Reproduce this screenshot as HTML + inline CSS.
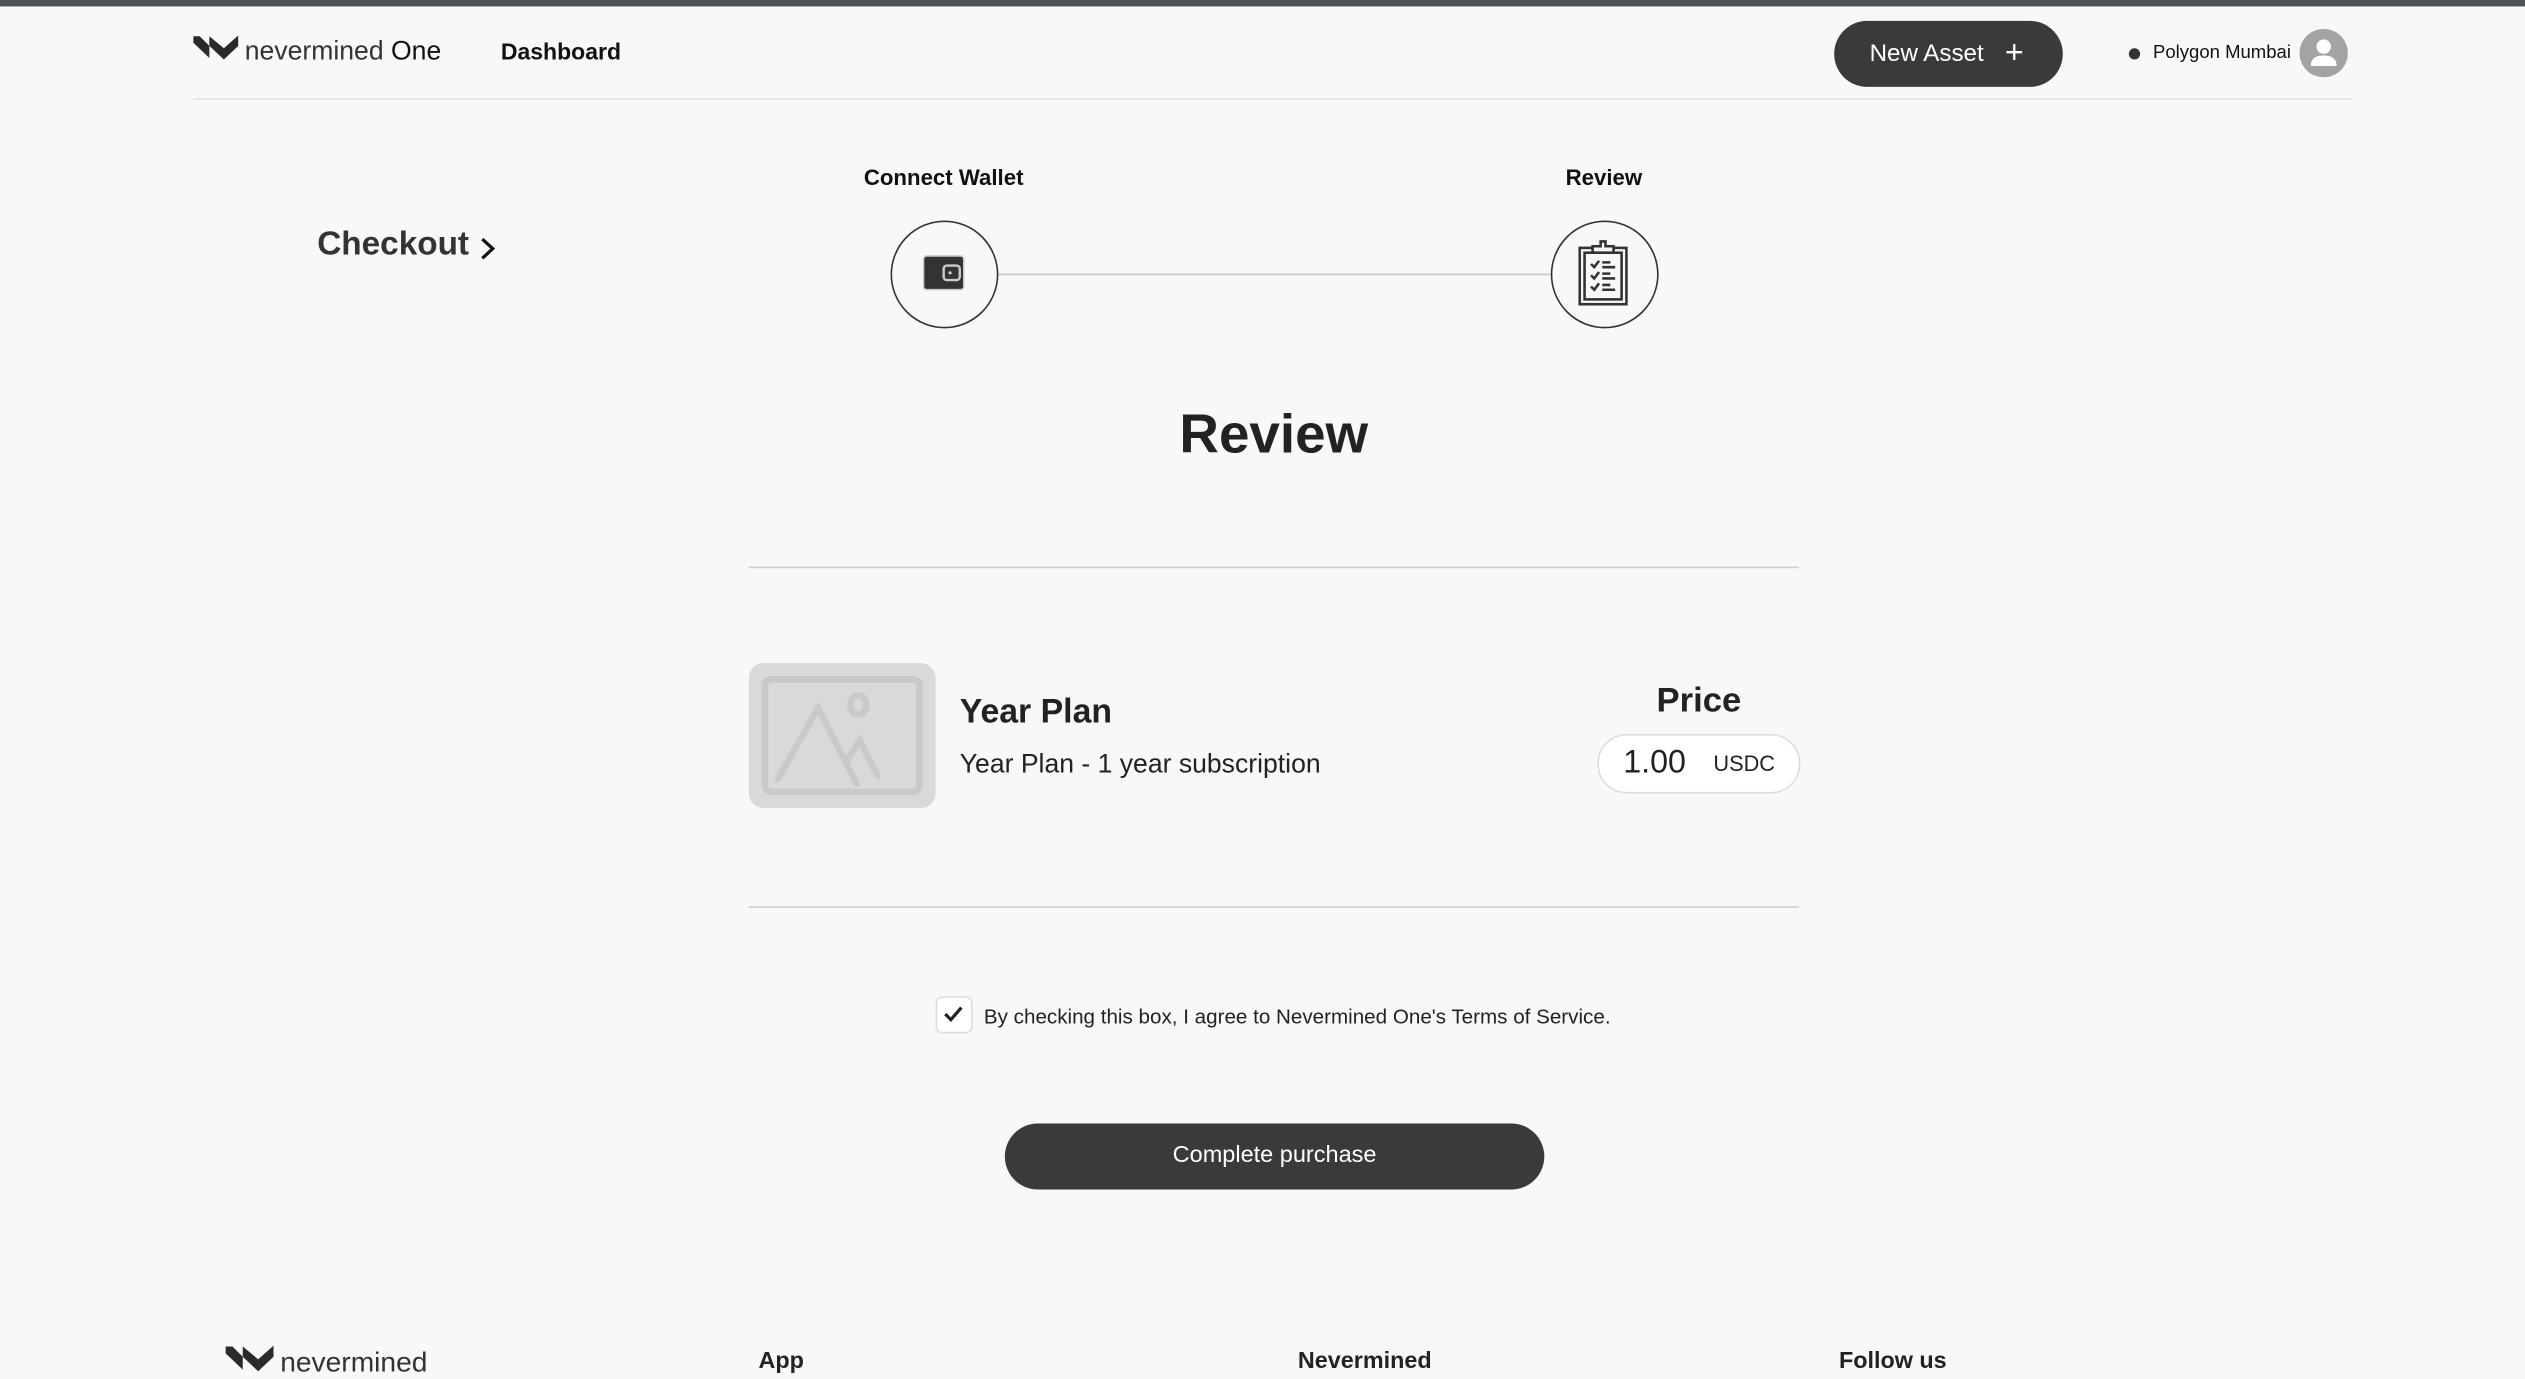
<!DOCTYPE html>
<html><head><meta charset="utf-8"><style>
html,body{margin:0;padding:0;background:#f8f8f8;overflow:hidden}
body{width:2525px;height:1373px}
#w{position:absolute;left:0;top:0;width:1568px;height:853px;transform:scale(1.61033,1.60961);transform-origin:0 0;font-family:"Liberation Sans",sans-serif;color:#222}
.a{position:absolute;white-space:nowrap}
.b{font-weight:bold}
</style></head><body><div id="w">
<div class="a" style="left:0;top:0;width:1568px;height:4px;background:#505357"></div>
<svg class="a" style="left:120px;top:22px" width="28" height="16" viewBox="0 0 28 16"><path d="M0 0.5H4L10 6.5V14L0 4.5Z M10 0.5L19 8L28 0V6.5L19 15L10 6.5Z" fill="#2a2a2a"/></svg>
<div class="a" style="left:152px;top:23px;font-size:16.5px;color:#333">nevermined <span style="color:#111">One</span></div>
<div class="a b" style="left:311px;top:25px;font-size:14.3px;color:#111">Dashboard</div>
<div class="a" style="left:1139px;top:13px;width:142px;height:41px;border-radius:21px;background:#3a3a3a;color:#fff;font-size:15px;line-height:41px"><span style="position:absolute;left:22px">New Asset</span><span style="position:absolute;left:106px;font-size:20px">+</span></div>
<div class="a" style="left:1322px;top:30px;width:7px;height:7px;border-radius:50%;background:#333"></div>
<div class="a" style="left:1337px;top:27px;font-size:11.5px;color:#111">Polygon Mumbai</div>
<svg class="a" style="left:1428px;top:18px" width="30" height="30" viewBox="0 0 30 30"><circle cx="15" cy="15" r="15" fill="#a3a3a3"/><circle cx="15" cy="11" r="4.5" fill="#fff"/><path d="M7 23c0-5 3.5-6.5 8-6.5s8 1.5 8 6.5z" fill="#fff"/></svg>
<div class="a" style="left:120px;top:61px;width:1341px;height:1px;background:#e2e2e2"></div>
<div class="a b" style="left:197px;top:140px;font-size:20.7px;color:#333">Checkout</div>
<svg class="a" style="left:297px;top:147px" width="12" height="15" viewBox="0 0 12 15"><path d="M2.5 1.5L9 7.5L2.5 13.5" fill="none" stroke="#111" stroke-width="2"/></svg>
<div class="a b" style="left:486px;top:103px;width:200px;text-align:center;font-size:13.8px;color:#111">Connect Wallet</div>
<div class="a b" style="left:896px;top:103px;width:200px;text-align:center;font-size:13.8px;color:#111">Review</div>
<div class="a" style="left:619px;top:170px;width:344px;height:1px;background:#c8c8c8"></div>
<div class="a" style="left:553px;top:137px;width:65px;height:65px;border:1px solid #333;border-radius:50%"></div>
<div class="a" style="left:963px;top:137px;width:65px;height:65px;border:1px solid #333;border-radius:50%"></div>
<svg class="a" style="left:573px;top:158px" width="26" height="24" viewBox="0 0 26 24"><rect x="0.5" y="1" width="25" height="21" rx="2" fill="#333" stroke="#ccc"/><rect x="13" y="7" width="10" height="9" rx="2" fill="#333" stroke="#ccc" stroke-width="1.5"/><circle cx="17" cy="11.5" r="1" fill="#ccc"/></svg>
<svg class="a" style="left:979px;top:148px" width="34" height="44" viewBox="0 0 34 44"><g fill="none" stroke="#333" stroke-width="1.6"><rect x="2" y="6" width="29" height="35"/><rect x="5" y="9" width="23" height="29"/><path d="M10 5h5v-3h3v3h5v4h-13z" fill="#f8f8f8"/><path d="M9 16l2 2 3-4M9 23l2 2 3-4M9 30l2 2 3-4"/><path d="M16 15h5M16 18h8M16 22h5M16 25h8M16 29h5M16 32h8"/></g></svg>
<div class="a b" style="left:591px;top:251px;width:400px;text-align:center;font-size:34px;color:#222">Review</div>
<div class="a" style="left:465px;top:352px;width:652px;height:1px;background:#cfcfcf"></div>
<div class="a" style="left:465px;top:412px;width:116px;height:90px;border-radius:9px;background:#d9d9d9"></div>
<svg class="a" style="left:465px;top:412px" width="116" height="90" viewBox="0 0 116 90"><g fill="none" stroke="#c9c9c9" stroke-width="4" stroke-linecap="round"><rect x="10" y="10" width="96" height="70" rx="4"/><ellipse cx="68" cy="26" rx="5" ry="6"/><path d="M18 72L43 28L67 75M60 62L69 48L80 70"/></g></svg>
<div class="a b" style="left:596px;top:431px;font-size:21px;color:#222">Year Plan</div>
<div class="a" style="left:596px;top:466px;font-size:16.5px;color:#222">Year Plan - 1 year subscription</div>
<div class="a b" style="left:995px;top:423px;width:120px;text-align:center;font-size:21.5px;color:#222">Price</div>
<div class="a" style="left:992px;top:456px;width:124px;height:35px;border:1px solid #ddd;border-radius:18px;background:#fff"><span class="a" style="left:15px;top:6px;font-size:20px;color:#222">1.00</span><span class="a" style="left:71px;top:10px;font-size:13.5px;color:#222">USDC</span></div>
<div class="a" style="left:465px;top:563px;width:652px;height:1px;background:#cfcfcf"></div>
<div class="a" style="left:581px;top:619px;width:21px;height:21px;border:1px solid #ddd;border-radius:4px;background:#fff"></div>
<svg class="a" style="left:585px;top:623px" width="14" height="14" viewBox="0 0 14 14"><path d="M2 7l3.5 3.5L12 3" fill="none" stroke="#222" stroke-width="2"/></svg>
<div class="a" style="left:611px;top:624px;font-size:12.8px;color:#222">By checking this box, I agree to Nevermined One's Terms of Service.</div>
<div class="a" style="left:624px;top:698px;width:335px;height:41px;border-radius:21px;background:#3a3a3a;color:#fff;font-size:14.6px;line-height:41px;text-align:center">Complete purchase</div>
<svg class="a" style="left:140px;top:836px" width="30" height="17" viewBox="0 0 28 16"><path d="M0 0.5H4L10 6.5V14L0 4.5Z M10 0.5L19 8L28 0V6.5L19 15L10 6.5Z" fill="#2a2a2a"/></svg>
<div class="a" style="left:174px;top:836px;font-size:17.5px;color:#333">nevermined</div>
<div class="a b" style="left:471px;top:838px;font-size:14.5px;color:#222">App</div>
<div class="a b" style="left:806px;top:838px;font-size:14.5px;color:#222">Nevermined</div>
<div class="a b" style="left:1142px;top:838px;font-size:14.5px;color:#222">Follow us</div>
</div></body></html>
